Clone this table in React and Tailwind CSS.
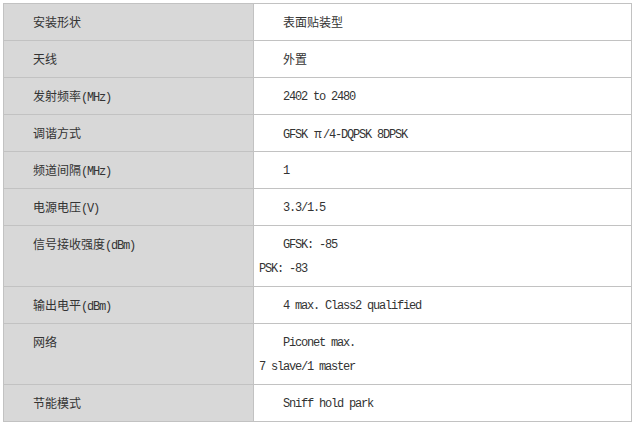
const rows = [
  { label: ["安装形状"], value: [{ cjk: "表面贴装型" }] },
  { label: ["天线"], value: [{ cjk: "外置" }] },
  { label: ["发射频率", "(MHz)"], value: [{ t: "2402 to 2480" }] },
  { label: ["调谐方式"], value: [{ t: "GFSK ", pi: true, rest: "/4-DQPSK 8DPSK" }] },
  { label: ["频道间隔", "(MHz)"], value: [{ t: "1" }] },
  { label: ["电源电压", "(V)"], value: [{ t: "3.3/1.5" }] },
  { label: ["信号接收强度", "(dBm)"], value: [{ t: "GFSK: -85" }, { t: "PSK: -83", noIndent: true }] },
  { label: ["输出电平", "(dBm)"], value: [{ t: "4 max. Class2 qualified" }] },
  { label: ["网络"], value: [{ t: "Piconet max." }, { t: "7 slave/1 master", noIndent: true }] },
  { label: ["节能模式"], value: [{ t: "Sniff hold park" }] },
];

const cjk = "font-['Noto_Sans_CJK_SC',sans-serif]";
const mono = "font-['Liberation_Mono',monospace] tracking-[-1.2px]";

function Line({ v }) {
  return (
    <div className={`h-[24px] leading-[24px] whitespace-nowrap ${v.noIndent ? "" : "pl-[24px]"}`}>
      {v.cjk ? (
        <span className={cjk}>{v.cjk}</span>
      ) : (
        <>
          <span className={mono}>{v.t}</span>
          {v.pi && <span className={`${cjk} px-[1px]`}>π</span>}
          {v.rest && <span className={mono}>{v.rest}</span>}
        </>
      )}
    </div>
  );
}

export default function App() {
  return (
    <div className="bg-white w-[637px] h-[423px] pt-[3px] pl-[3px]">
      <div className="w-[629px] border-l border-t border-[#c2c2c2] text-[12px] text-[#333333]">
        {rows.map((r, i) => (
          <div key={i} className="flex">
            <div className="w-[250px] shrink-0 bg-[#d8d8d8] border-r border-b border-[#c2c2c2] pl-[29px] py-[6px]">
              <div className="h-[24px] leading-[24px] whitespace-nowrap">
                <span className={cjk}>{r.label[0]}</span>
                {r.label[1] && <span className={mono}>{r.label[1]}</span>}
              </div>
            </div>
            <div className="w-[378px] shrink-0 bg-white border-r border-b border-[#c2c2c2] pl-[5px] py-[6px]">
              {r.value.map((v, j) => (
                <Line key={j} v={v} />
              ))}
            </div>
          </div>
        ))}
      </div>
    </div>
  );
}
